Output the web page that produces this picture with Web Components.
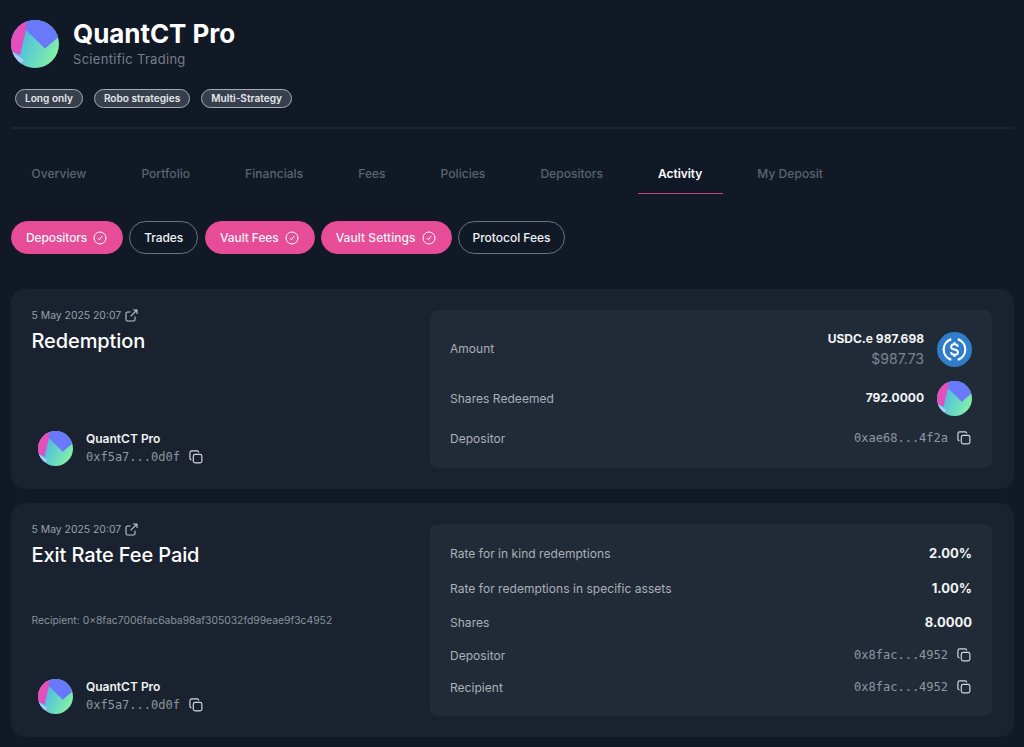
<!DOCTYPE html>
<html>
<head>
<meta charset="utf-8">
<title>QuantCT Pro</title>
<style>
  html, body { margin: 0; height: 747px; overflow: hidden; background: #111926; }
  body { font-family: Inter, "Liberation Sans", sans-serif; color: #fff; }
</style>
</head>
<body>
<vault-page></vault-page>

<script>
let logoCount = 0;

class VaultLogo extends HTMLElement {
  connectedCallback() {
    const size = this.getAttribute('size') ?? 36;
    const id = `logo-${logoCount++}`;
    this.attachShadow({ mode: 'open' }).innerHTML = `
      <style>:host { display: block; width: ${size}px; height: ${size}px; flex: none; } svg { display: block; }</style>
      <svg width="${size}" height="${size}" viewBox="0 0 48 48">
        <defs>
          <clipPath id="${id}-c"><circle cx="24" cy="24" r="24"/></clipPath>
          <linearGradient id="${id}-g" x1="0.1" y1="0.3" x2="1" y2="0.7">
            <stop offset="0" stop-color="#45b4ea"/><stop offset="1" stop-color="#86f3a4"/>
          </linearGradient>
          <linearGradient id="${id}-p" x1="0" y1="0" x2="1" y2="1">
            <stop offset="0" stop-color="#f04fb0"/><stop offset="1" stop-color="#d94fc8"/>
          </linearGradient>
        </defs>
        <g clip-path="url(#${id}-c)">
          <rect width="48" height="48" fill="url(#${id}-g)"/>
          <path d="M15 0H48V16.5L34 28.5L15 10Z" fill="#6a78fb"/>
          <path d="M0 0H15.5L15 10L9 35L0 31Z" fill="url(#${id}-p)"/>
          <path d="M0 31L13 40L8 45L0 45Z" fill="#b0c8fc"/>
        </g>
      </svg>`;
  }
}
customElements.define('vault-logo', VaultLogo);

class TagPill extends HTMLElement {
  constructor() {
    super();
    this.attachShadow({ mode: 'open' }).innerHTML = `
      <style>
        :host { display: block; height: 19px; box-sizing: border-box; padding: 0 9px; border: 1px solid #a5abb4; border-radius: 10px;
          background: #373f4d; color: #e6e8eb; font-size: 10.1px; font-weight: 600; line-height: 17px; white-space: nowrap; }
      </style><slot></slot>`;
  }
}
customElements.define('tag-pill', TagPill);

class NavTabs extends HTMLElement {
  constructor() {
    super();
    const tabs = ['Overview', 'Portfolio', 'Financials', 'Fees', 'Policies', 'Depositors', 'Activity', 'My Deposit'];
    this.attachShadow({ mode: 'open' }).innerHTML = `
      <style>
        :host { display: flex; gap: 14px; height: 32px; font-size: 12px; font-weight: 500; letter-spacing: .05px; color: #5b6472; }
        div { box-sizing: border-box; height: 32px; line-height: 24px; padding: 0 20.5px; white-space: nowrap; }
        .on { color: #fff; font-weight: 600; letter-spacing: -.05px; border-bottom: 1px solid #c0447f; }
      </style>
      ${tabs.map(t => `<div class="${t === 'Activity' ? 'on' : ''}">${t}</div>`).join('')}`;
  }
}
customElements.define('nav-tabs', NavTabs);

class FilterChip extends HTMLElement {
  constructor() {
    super();
    this.attachShadow({ mode: 'open' }).innerHTML = `
      <style>
        :host { display: flex; align-items: center; gap: 6px; height: 33px; box-sizing: border-box; padding: 0 14px; border-radius: 17px;
          border: 1px solid #6b7280; font-size: 12px; font-weight: 500; letter-spacing: -.1px; color: #f2f3f5; white-space: nowrap; }
        :host([active]) { background: #e64c97; border-color: #e64c97; padding: 0 15px 0 14px; }
        svg { display: none; }
        :host([active]) svg { display: block; }
      </style>
      <slot></slot>
      <svg width="14" height="14" viewBox="0 0 14 14" fill="none" stroke="#fff" stroke-width="1">
        <circle cx="7" cy="7" r="6"/><path d="M5 7.4L6.4 8.8L9 5.2" stroke-linecap="round" stroke-linejoin="round"/>
      </svg>`;
  }
}
customElements.define('filter-chip', FilterChip);

class CopyAddress extends HTMLElement {
  constructor() {
    super();
    this.attachShadow({ mode: 'open' }).innerHTML = `
      <style>
        :host { display: flex; align-items: center; gap: 9px; font: 12px/16px "DejaVu Sans Mono", monospace; color: #8f96a1; }
        svg { display: block; flex: none; margin-right: 1px; }
      </style>
      <slot></slot>
      <svg width="14" height="14" viewBox="0 0 15 15" fill="none" stroke="#d5d8dd" stroke-width="1.25">
        <rect x="4.6" y="4.6" width="9.2" height="9.2" rx="2"/>
        <path d="M10.4 2.6V2.4A1.6 1.6 0 0 0 8.8 1H3A2 2 0 0 0 1 3V8.8A1.6 1.6 0 0 0 2.6 10.4"/>
      </svg>`;
  }
}
customElements.define('copy-address', CopyAddress);

class DataRow extends HTMLElement {
  constructor() {
    super();
    this.attachShadow({ mode: 'open' }).innerHTML = `
      <style>
        :host { display: flex; align-items: center; justify-content: space-between; font-size: 12px; letter-spacing: .04px; color: #aab0b9; }
        .value { display: flex; align-items: center; gap: 13px; text-align: right; letter-spacing: 0; }
      </style>
      <slot name="label"></slot>
      <div class="value"><slot></slot></div>`;
  }
}
customElements.define('data-row', DataRow);

class ActivityCard extends HTMLElement {
  constructor() {
    super();
    this.attachShadow({ mode: 'open' }).innerHTML = `
      <style>
        :host { display: grid; grid-template-columns: 1fr 562px; box-sizing: border-box; padding: 21px 22px 21px 20.5px;
          background: #19222e; border-radius: 14px; }
        .left { display: flex; flex-direction: column; width: 398px; }
        .date { display: flex; align-items: center; gap: 4px; height: 13px; margin-top: -1px; font-size: 10.4px; font-weight: 400; color: #9aa1ab; }
        h2 { margin: 4px 0 0; font-size: 20px; line-height: 30px; font-weight: 500; letter-spacing: -.1px; color: #fff; }
        .vault { display: flex; align-items: center; gap: 13px; margin: auto 0 2.5px; padding-left: 6.5px; }
        .name { font-size: 12px; font-weight: 600; line-height: 16px; color: #f0f1f3; margin-bottom: 2px; }
        .panel { display: flex; flex-direction: column; box-sizing: border-box; padding: 0 20px; background: #212b37; border-radius: 8px; }
      </style>
      <div class="left">
        <div class="date">5 May 2025 20:07
          <svg width="13" height="13" viewBox="0 0 13 13" fill="none" stroke="#c4c8ce" stroke-width="1.1">
            <path d="M10 7.4V10.6A1.4 1.4 0 0 1 8.6 12H2.4A1.4 1.4 0 0 1 1 10.6V4.4A1.4 1.4 0 0 1 2.4 3H5.6"/>
            <path d="M8 1H12V5M12 1L5.6 7.4"/>
          </svg>
        </div>
        <h2></h2>
        <slot name="note"></slot>
        <div class="vault">
          <vault-logo size="35"></vault-logo>
          <div>
            <div class="name">QuantCT Pro</div>
            <copy-address></copy-address>
          </div>
        </div>
      </div>
      <div class="panel"><slot></slot></div>`;
  }

  connectedCallback() {
    this.shadowRoot.querySelector('h2').textContent = this.getAttribute('heading');
    this.shadowRoot.querySelector('copy-address').textContent = this.getAttribute('vault');
    this.style.height = this.getAttribute('card-height') + 'px';
  }
}
customElements.define('activity-card', ActivityCard);

class VaultPage extends HTMLElement {
  constructor() {
    super();
    this.attachShadow({ mode: 'open' }).innerHTML = `
      <style>
        :host { display: block; padding: 20px 10px 0 11px; }
        .head { display: flex; align-items: center; gap: 14px; height: 48px; }
        h1 { margin: 0; font-size: 26px; line-height: 28px; font-weight: 700; letter-spacing: -.05px; color: #fff; }
        .sub { margin-top: 2px; font-size: 13px; line-height: 18px; color: #767d89; letter-spacing: .3px; }
        .tags { display: flex; gap: 11px; margin: 21px 0 0 4px; }
        hr { margin: 19px 0 0; height: 2px; background: #1a2530; border: 0; }
        nav-tabs { margin-top: 33px; }
        .chips { display: flex; gap: 6px; margin-top: 27px; }
        .cards { display: flex; flex-direction: column; gap: 14px; margin-top: 35px; }
        .hd { color: #aab0b9; }
        .b { font-size: 12px; font-weight: 700; line-height: 16px; color: #f4f5f6; }
        .b13 { font-size: 13px; }
        .usd { margin-top: 2px; font-size: 14px; line-height: 20px; color: #7d8490; }
        .stack { display: flex; flex-direction: column; align-items: flex-end; padding-top: 2px; }
        .r1 { height: 46px; margin-top: 16px; }
        .r1 .hd { margin-bottom: 2px; }
        .r2 { height: 36px; margin-top: 8px; }
        .r3 { height: 20px; margin-top: 12px; }
        .s1 { height: 20px; }
        .note { display: block; margin-top: 43px; font-size: 10.33px; line-height: 14px; color: #8b929d; }
      </style>
      <div class="head">
        <vault-logo size="48"></vault-logo>
        <div><h1>QuantCT Pro</h1><div class="sub">Scientific Trading</div></div>
      </div>
      <div class="tags">
        <tag-pill>Long only</tag-pill><tag-pill>Robo strategies</tag-pill><tag-pill>Multi-Strategy</tag-pill>
      </div>
      <hr>
      <nav-tabs></nav-tabs>
      <div class="chips">
        <filter-chip active>Depositors</filter-chip>
        <filter-chip style="margin-right:1px">Trades</filter-chip>
        <filter-chip active>Vault Fees</filter-chip>
        <filter-chip active style="letter-spacing:.05px">Vault Settings</filter-chip>
        <filter-chip style="letter-spacing:-.02px">Protocol Fees</filter-chip>
      </div>
      <div class="cards">
        <activity-card heading="Redemption" vault="0xf5a7...0d0f" card-height="200">
          <data-row class="r1"><span slot="label" class="hd">Amount</span>
            <div class="stack"><span class="b">USDC.e 987.698</span><span class="usd">$987.73</span></div>
            <svg width="35" height="35" viewBox="0 0 32 32">
              <circle cx="16" cy="16" r="16" fill="#2f7dcb"/>
              <g fill="none" stroke="#fff">
                <path d="M13 6.5A10 10 0 0 0 13 25.5" stroke-width="2"/>
                <path d="M19 6.5A10 10 0 0 1 19 25.5" stroke-width="2"/>
                <path d="M19.2 13.6C19 12 17.7 11.2 16 11.2C14.2 11.2 12.9 12.2 12.9 13.6C12.9 15.2 14.3 15.6 16 16C17.7 16.4 19.2 16.9 19.2 18.4C19.2 19.8 17.8 20.8 16 20.8C14.2 20.8 12.9 20 12.8 18.4" stroke-width="1.7"/>
                <path d="M16 9.2V11.2M16 20.8V22.8" stroke-width="1.7"/>
              </g>
            </svg>
          </data-row>
          <data-row class="r2"><span slot="label" class="hd">Shares Redeemed</span>
            <span class="b">792.0000</span><vault-logo size="35"></vault-logo>
          </data-row>
          <data-row class="r3"><span slot="label" class="hd">Depositor</span><copy-address>0xae68...4f2a</copy-address></data-row>
        </activity-card>
        <activity-card heading="Exit Rate Fee Paid" vault="0xf5a7...0d0f" card-height="234">
          <span slot="note" class="note">Recipient: 0×8fac7006fac6aba98af305032fd99eae9f3c4952</span>
          <data-row class="s1" style="margin-top:19px"><span slot="label" class="hd">Rate for in kind redemptions</span><span class="b b13">2.00%</span></data-row>
          <data-row class="s1" style="margin-top:15px"><span slot="label" class="hd">Rate for redemptions in specific assets</span><span class="b b13">1.00%</span></data-row>
          <data-row class="s1" style="margin-top:14px"><span slot="label" class="hd">Shares</span><span class="b b13">8.0000</span></data-row>
          <data-row class="s1" style="margin-top:13px"><span slot="label" class="hd">Depositor</span><copy-address>0x8fac...4952</copy-address></data-row>
          <data-row class="s1" style="margin-top:12px"><span slot="label" class="hd">Recipient</span><copy-address>0x8fac...4952</copy-address></data-row>
        </activity-card>
      </div>`;
  }
}
customElements.define('vault-page', VaultPage);
</script>
</body>
</html>
